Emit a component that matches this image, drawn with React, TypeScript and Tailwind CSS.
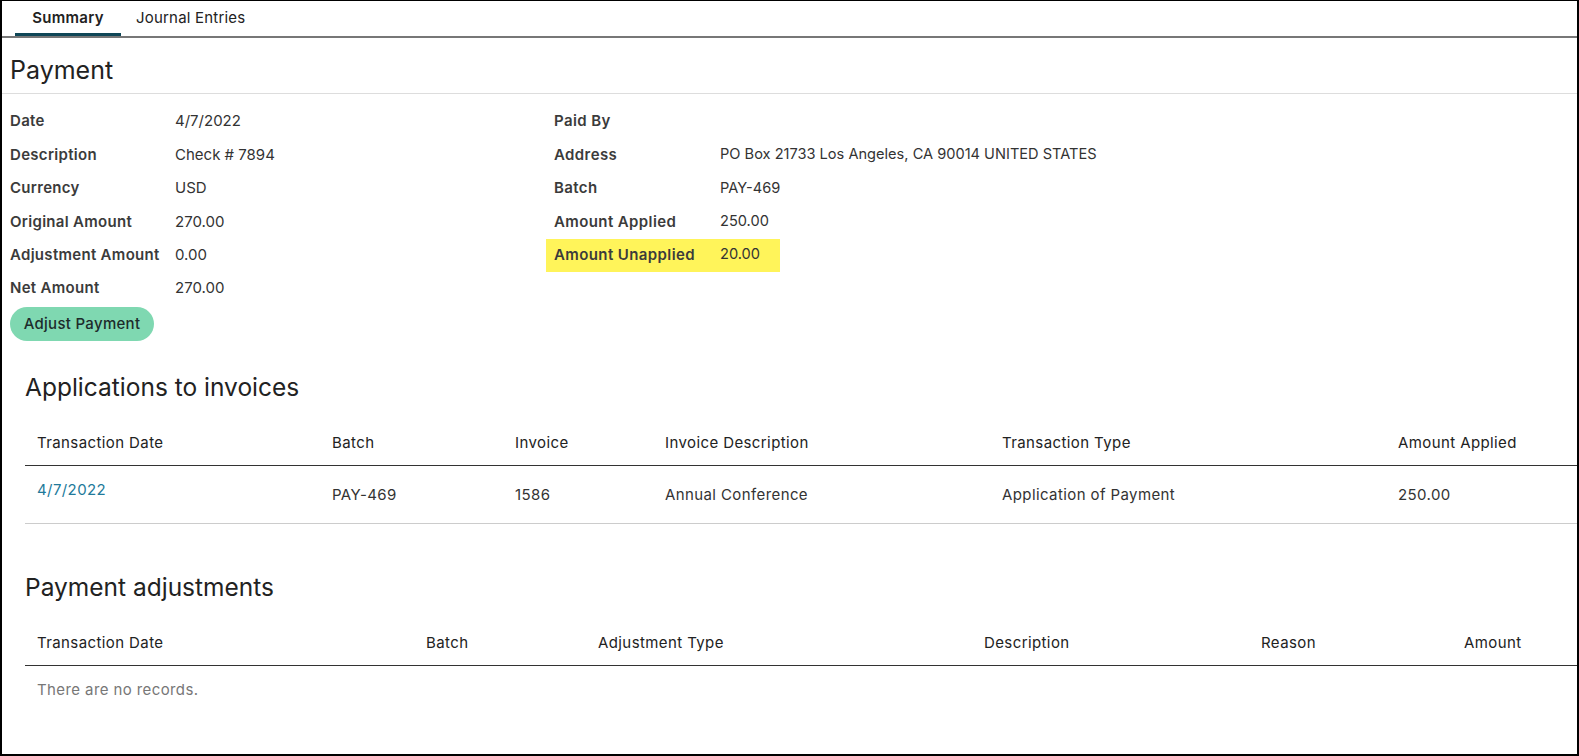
import React from "react";

const leftFields = [
  { label: "Date", value: "4/7/2022" },
  { label: "Description", value: "Check # 7894" },
  { label: "Currency", value: "USD" },
  { label: "Original Amount", value: "270.00" },
  { label: "Adjustment Amount", value: "0.00" },
  { label: "Net Amount", value: "270.00" },
];

const rightFields = [
  { label: "Paid By", value: "" },
  { label: "Address", value: "PO Box 21733 Los Angeles, CA 90014 UNITED STATES" },
  { label: "Batch", value: "PAY-469" },
  { label: "Amount Applied", value: "250.00" },
  { label: "Amount Unapplied", value: "20.00", highlight: true },
];

const appCols = "grid grid-cols-[295px_183px_150px_337px_396px_1fr]";
const adjCols = "grid grid-cols-[389px_172px_386px_277px_203px_1fr]";

export default function App() {
  return (
    <div className="w-[1579px] h-[756px] border-t border-x-2 border-b-2 border-black bg-white font-['Inter',sans-serif] text-[15px] text-[#333] overflow-hidden">
      {/* tabs */}
      <div className="flex h-[37px] border-b-2 border-[#777] pl-[13px]">
        <div className="relative flex w-[106px] items-center justify-center font-semibold tracking-[0.3px] text-[#222]">
          Summary
          <span className="absolute bottom-0 left-0 right-0 h-[3px] bg-[#0f4757]" />
        </div>
        <div className="flex items-center px-[15px] tracking-[0.2px] text-[#222]">Journal Entries</div>
      </div>

      {/* payment header */}
      <div className="h-[56px] border-b border-[#ddd] pl-[8px] pt-[16px]">
        <h1 className="text-[25px] leading-[32px] text-[#222]">Payment</h1>
      </div>

      <div className="pl-[8px] pt-[11px]">
        <div className="grid grid-cols-[536px_1fr]">
          <div>
            {leftFields.map((f) => (
              <div key={f.label} className="flex h-[33.4px] items-center whitespace-nowrap">
                <div className="w-[165px] shrink-0 font-semibold tracking-[0.3px] text-[#3b3b3b]">{f.label}</div>
                <div>{f.value}</div>
              </div>
            ))}
          </div>
          <div>
            {rightFields.map((f) => (
              <div
                key={f.label}
                className={`flex h-[33.4px] w-[234px] items-center px-[8px] whitespace-nowrap ${f.highlight ? "bg-[#fff45a]" : ""}`}
              >
                <div className="w-[166px] shrink-0 font-semibold tracking-[0.4px] text-[#3b3b3b]">{f.label}</div>
                <div className="text-[14.6px]">{f.value}</div>
              </div>
            ))}
          </div>
        </div>
        <button className="mt-[2px] h-[34px] w-[144px] rounded-full bg-[#7fd8b1] font-medium tracking-[0.3px] text-[#1d2b2b]">
          Adjust Payment
        </button>
      </div>

      {/* applications */}
      <div className="pl-[23px] tracking-[0.4px]">
        <h2 className="mt-[30px] text-[24.5px] leading-[32px] tracking-normal text-[#222]">Applications to invoices</h2>
        <div className={`${appCols} mt-[18px] h-[45px] items-center border-b border-[#333] text-[#222]`}>
          <div className="px-3">Transaction Date</div>
          <div className="px-3">Batch</div>
          <div className="px-3">Invoice</div>
          <div className="px-3">Invoice Description</div>
          <div className="px-3">Transaction Type</div>
          <div className="px-3">Amount Applied</div>
        </div>
        <div className={`${appCols} h-[58px] items-center border-b border-[#ccc]`}>
          <div className="self-start px-3 pt-[13px] text-[#22799a]">4/7/2022</div>
          <div className="px-3">PAY-469</div>
          <div className="px-3">1586</div>
          <div className="px-3">Annual Conference</div>
          <div className="px-3">Application of Payment</div>
          <div className="px-3">250.00</div>
        </div>

        <h2 className="mt-[47px] text-[24.5px] leading-[32px] tracking-normal text-[#222]">Payment adjustments</h2>
        <div className={`${adjCols} mt-[17px] h-[46px] items-center border-b border-[#333] text-[#222]`}>
          <div className="px-3">Transaction Date</div>
          <div className="px-3">Batch</div>
          <div className="px-3">Adjustment Type</div>
          <div className="px-3">Description</div>
          <div className="px-3">Reason</div>
          <div className="px-3">Amount</div>
        </div>
        <div className="px-3 pt-[14px] leading-[20px] text-[#777]">There are no records.</div>
      </div>
    </div>
  );
}
